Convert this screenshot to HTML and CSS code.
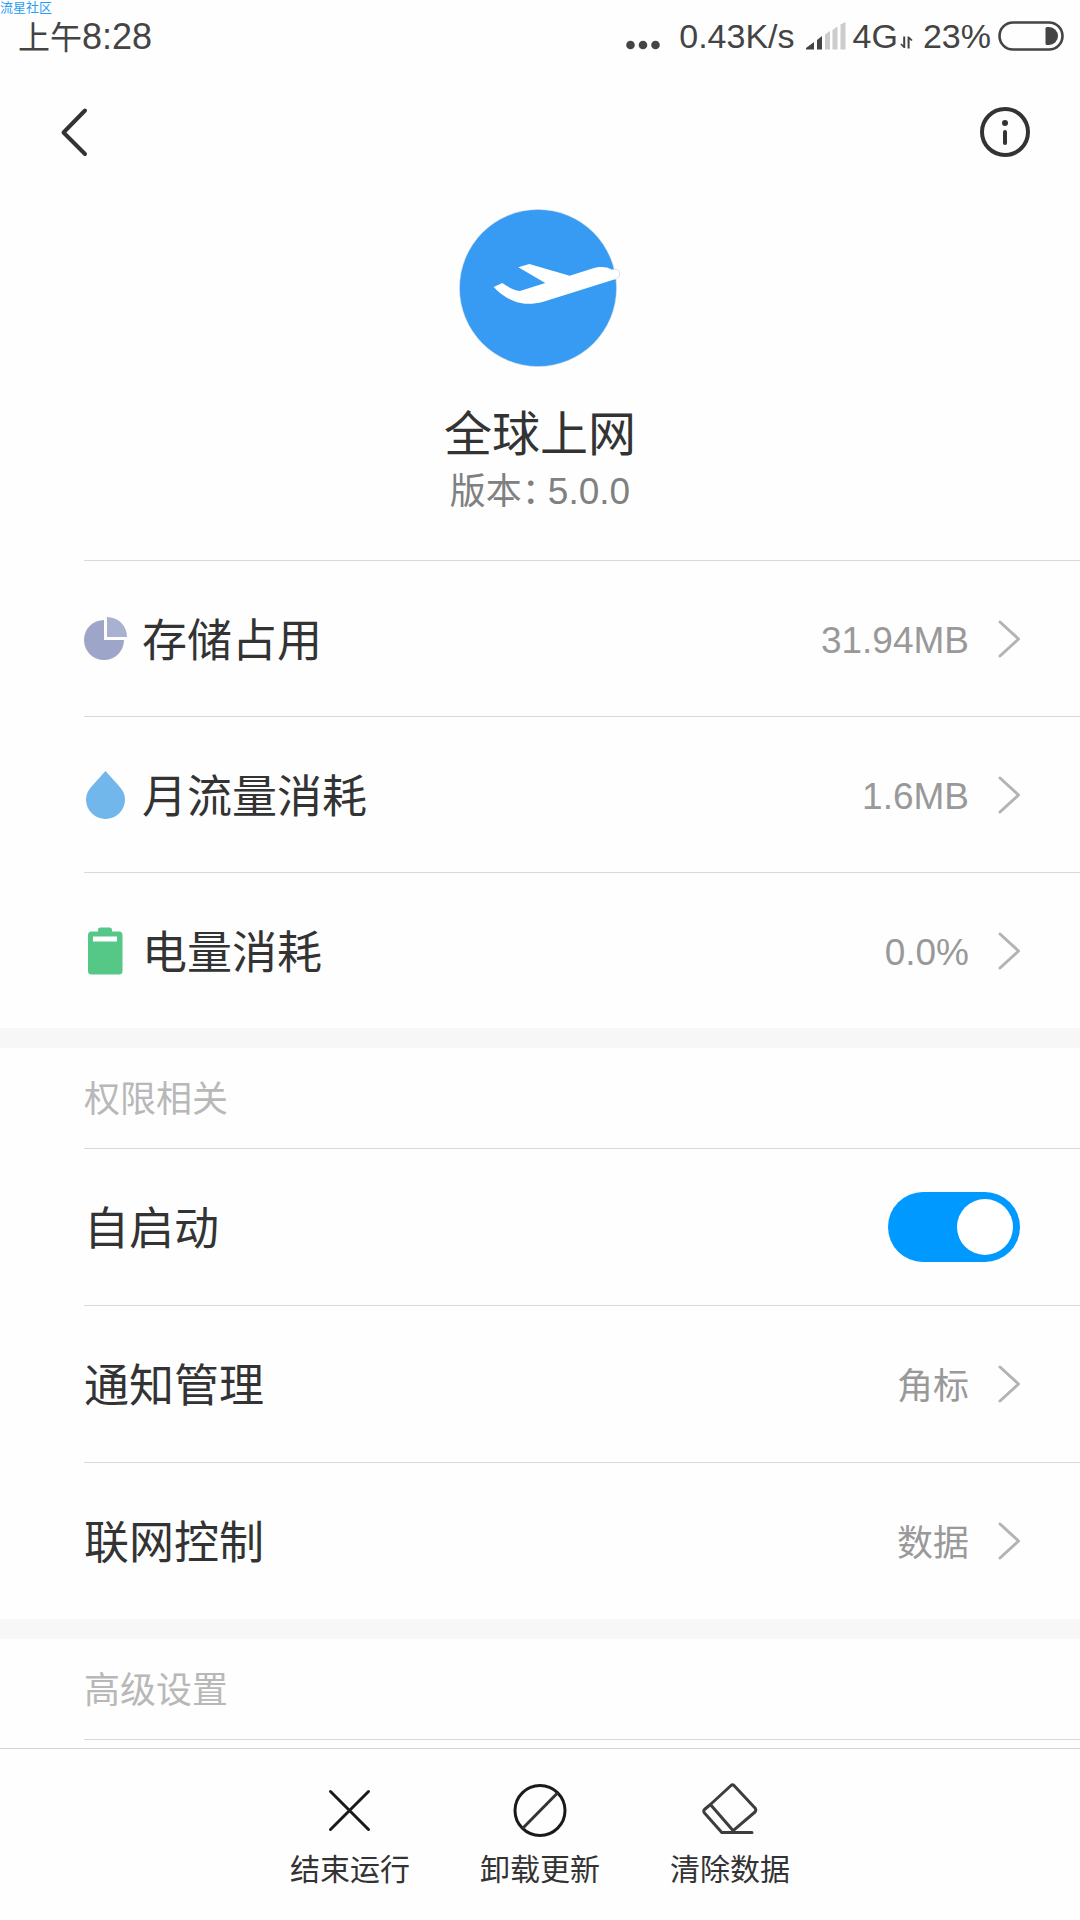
FILE: index.html
```html
<!DOCTYPE html>
<html lang="zh-CN">
<head>
<meta charset="UTF-8" />
<meta name="viewport" content="width=device-width, initial-scale=1.0" />
<title>全球上网</title>
<link rel="stylesheet" href="styles.css">
</head>
<body>

<span class="watermark">流星社区</span>

<!-- Status bar -->
<div class="status-bar">
  <div class="status-time"><span class="status-ampm">上午</span>8:28</div>
  <div class="status-right">
    <svg class="icon-dots" width="34" height="10" viewBox="0 0 34 10" fill="#444">
      <circle cx="4.500" cy="5" r="4.3"/><circle cx="17" cy="5" r="4.3"/><circle cx="29.500" cy="5" r="4.3"/>
    </svg>
    <span>0.43K/s</span>
    <svg class="icon-signal" width="40" height="28" viewBox="0 0 40 28">
      <path d="M0 27.500V26L8 20V27.500ZM11 27.500V18L16 14V27.500Z" fill="#444"/>
      <path d="M19 27.500V12.500L24 9V27.500ZM26.500 27.500V8L31.500 4.500V27.500ZM34.500 27.500V2.500L39.500 0V27.500Z" fill="#ccc"/>
    </svg>
    <span>4G</span>
    <svg class="icon-updown" width="13" height="13" viewBox="0 0 13 13" fill="#444">
      <path d="M3.200 0.500H5.200V12H3.800L0.300 8.500L1.300 7.600L3.200 9ZM7.600 12.500V0.500H9L12.600 4L11.500 5L9.600 3.500V12.500Z"/>
    </svg>
    <span>23%</span>
    <svg class="icon-battery" width="66" height="30" viewBox="0 0 66 30">
      <rect x="1.500" y="1.500" width="63" height="27" rx="13.500" fill="none" stroke="#444" stroke-width="2.600"/>
      <path d="M49 6H51A9 9 0 0 1 51 24H49A1.500 1.500 0 0 1 47.500 22.500V7.500A1.500 1.500 0 0 1 49 6Z" fill="#444"/>
    </svg>
  </div>
</div>

<!-- Toolbar -->
<header class="toolbar">
  <button class="icon-btn" aria-label="返回">
    <svg width="50" height="50" viewBox="0 0 50 50" fill="none" stroke="#333" stroke-width="4" stroke-linecap="round" stroke-linejoin="round">
      <path d="M35 3.500L13.500 25.500L35 47"/>
    </svg>
  </button>
  <button class="icon-btn" aria-label="信息">
    <svg width="50" height="50" viewBox="0 0 50 50">
      <circle cx="25" cy="25" r="23" fill="none" stroke="#333" stroke-width="4"/>
      <circle cx="25" cy="16" r="3" fill="#333"/>
      <path d="M25 25V36" stroke="#333" stroke-width="4" stroke-linecap="round"/>
    </svg>
  </button>
</header>

<main class="content">
  <div class="app-info">
    <svg width="164" height="160" viewBox="0 0 164 160">
      <circle cx="80" cy="80" r="78.500" fill="#389bf3" stroke="#ddd" stroke-width="0.500"/>
      <path d="M35.700 79L44.300 75C50 79 55 82 62 83L87.300 75L60.300 59.300L71.300 56L111.700 67.700L135.300 60.300C141 58.500 149 58.500 153.700 61.700C159 60 162 62.500 161.700 66C161.500 69 159 70.800 157 71.300L85.300 93.700C79 95.600 73 96 67 95.700C55 95 43 87 35.700 79Z" fill="#fff"/>
      <path d="M154 61.700C159 60 162 62.500 161.700 66C161.500 69 159 70.800 157 71.300" fill="none" stroke="#ddd" stroke-width="1"/>
    </svg>
    <h1 class="app-name">全球上网</h1>
    <p class="app-version">版本：<span class="num">5.0.0</span></p>
  </div>

  <!-- Usage -->
  <section class="group usage">
    <a class="row" href="#">
      <svg class="row-icon" width="44" height="48" viewBox="0 0 44 48">
        <path d="M20 5A20 20 0 1 0 40 25H20Z" fill="#9da6c8"/>
        <path d="M23 2A20 20 0 0 1 43 22H23Z" fill="#a9b1d0"/>
      </svg>
      <span class="row-label">存储占用</span>
      <span class="row-value num">31.94MB</span>
      <svg class="chevron" width="22" height="38" viewBox="0 0 22 38"><path d="M2 2L20.500 19L2 36"/></svg>
    </a>
    <a class="row" href="#">
      <svg class="row-icon" width="44" height="48" viewBox="0 0 44 48">
        <path d="M21.500 0L35 15C39 19 41 24 41 28.500A19.500 19.500 0 0 1 2 28.500C2 24 4 19 8 15Z" fill="#71b7ec"/>
      </svg>
      <span class="row-label">月流量消耗</span>
      <span class="row-value num">1.6MB</span>
      <svg class="chevron" width="22" height="38" viewBox="0 0 22 38"><path d="M2 2L20.500 19L2 36"/></svg>
    </a>
    <a class="row" href="#">
      <svg class="row-icon" width="44" height="48" viewBox="0 0 44 48">
        <path d="M14 4.500V3A2.500 2.500 0 0 1 16.500 0.500H25.500A2.500 2.500 0 0 1 28 3V4.500H35A3.500 3.500 0 0 1 38.500 8V44A3.500 3.500 0 0 1 35 47.500H7.500A3.500 3.500 0 0 1 4 44V8A3.500 3.500 0 0 1 7.500 4.500Z" fill="#55c888"/>
        <rect x="9" y="9.500" width="24" height="5" fill="#fff"/>
      </svg>
      <span class="row-label">电量消耗</span>
      <span class="row-value num">0.0%</span>
      <svg class="chevron" width="22" height="38" viewBox="0 0 22 38"><path d="M2 2L20.500 19L2 36"/></svg>
    </a>
  </section>

  <!-- Permissions -->
  <section class="group">
    <h2 class="group-title">权限相关</h2>
    <div class="row">
      <label class="row-label" for="autostart">自启动</label>
      <input class="switch" type="checkbox" id="autostart" checked>
    </div>
    <a class="row" href="#">
      <span class="row-label">通知管理</span>
      <span class="row-value">角标</span>
      <svg class="chevron" width="22" height="38" viewBox="0 0 22 38"><path d="M2 2L20.500 19L2 36"/></svg>
    </a>
    <a class="row" href="#">
      <span class="row-label">联网控制</span>
      <span class="row-value">数据</span>
      <svg class="chevron" width="22" height="38" viewBox="0 0 22 38"><path d="M2 2L20.500 19L2 36"/></svg>
    </a>
  </section>

  <!-- Advanced -->
  <section class="group">
    <h2 class="group-title">高级设置</h2>
    <div class="row"></div>
  </section>
</main>

<!-- Bottom actions -->
<footer class="actions">
  <button class="action">
    <svg width="56" height="56" viewBox="0 0 56 56" fill="none" stroke="#1a1a1a" stroke-width="3" stroke-linecap="round">
      <path d="M8.500 9.500L46.500 47.500M46.500 9.500L8.500 47.500"/>
    </svg>
    <span>结束运行</span>
  </button>
  <button class="action">
    <svg width="56" height="56" viewBox="0 0 56 56" fill="none" stroke="#1a1a1a" stroke-width="3">
      <circle cx="28" cy="28.500" r="25"/>
      <path d="M10.500 46.500L45.500 11" stroke="#333"/>
    </svg>
    <span>卸载更新</span>
  </button>
  <button class="action">
    <svg width="56" height="56" viewBox="0 0 56 56" fill="none" stroke="#3d3d3d" stroke-width="3" stroke-linecap="round" stroke-linejoin="round">
      <path d="M29 3.500Q30.500 2.300 32 3.500L53 26Q54.500 28 53 30L31.200 48.700L8.400 22.500ZM8.400 22.500L2.500 27.500Q1 29 2.500 31L19.800 50.500H50"/>
    </svg>
    <span>清除数据</span>
  </button>
</footer>

</body>
</html>
```

FILE: styles.css
```css
* {
  box-sizing: border-box;
}

body {
  margin: 0;
  height: 100vh;
  display: flex;
  flex-direction: column;
  overflow: hidden;
  background-color: #fefefe;
  color: #333;
  font-family: "Noto Sans CJK SC", sans-serif;
}

svg {
  display: block;
  flex-shrink: 0;
}

button {
  padding: 0;
  border: none;
  background: none;
  color: inherit;
  font: inherit;
  cursor: pointer;
}

.watermark {
  position: absolute;
  top: 0;
  left: 0;
  font-size: 13px;
  line-height: 13px;
  color: #2a9df4;
}

/* Status bar */
.status-bar {
  display: flex;
  justify-content: space-between;
  align-items: center;
  height: 72px;
  padding: 0 16px 0 18px;
  font-family: "Liberation Sans", "Noto Sans CJK SC", sans-serif;
  font-size: 34px;
  line-height: 40px;
  color: #444;
}

.status-time {
  padding-top: 3px;
  font-size: 36px;
}

.status-ampm {
  font-size: 32px;
}

.status-right {
  display: flex;
  align-items: center;
}

.icon-dots {
  margin: 18px 19px 0 0;
}

.icon-signal {
  margin: 0 7px 0 11px;
}

.icon-updown {
  margin: 12px 10px 0 2px;
}

.icon-battery {
  margin-left: 7px;
}

/* Toolbar */
.toolbar {
  display: flex;
  justify-content: space-between;
  align-items: center;
  height: 120px;
  padding: 0 50px;
}

/* App info */
.content {
  flex: 1;
  min-height: 0;
  overflow: hidden;
}

.app-info {
  display: flex;
  flex-direction: column;
  align-items: center;
  padding: 16px 0 48px;
}

.app-name {
  margin: 30px 0 0;
  font-size: 48px;
  font-weight: 400;
  line-height: 64px;
}

.app-version {
  margin: 2px 0 0;
  font-size: 36px;
  line-height: 48px;
  color: #808080;
  font-feature-settings: "halt";
}

.num {
  font-family: "Liberation Sans", sans-serif;
  font-size: 37px;
  line-height: 1;
}

.app-version .num {
  margin-left: 8px;
}

/* Groups and rows */
.group + .group {
  border-top: 20px solid #f7f7f7;
}

.group-title {
  margin: 0;
  padding: 24px 0 28px 84px;
  font-size: 36px;
  font-weight: 400;
  line-height: 48px;
  color: #b8b8b8;
}

.row {
  display: flex;
  align-items: center;
  margin-left: 84px;
  padding: 46px 60px 46px 0;
  border-top: 1px solid #d9d9d9;
  color: #333;
  text-decoration: none;
}

.usage .row {
  padding-bottom: 45px;
}

.row-icon {
  margin-right: 14px;
}

.row-label {
  flex: 1;
  padding-bottom: 2px;
  font-size: 45px;
  line-height: 62px;
}

.row-value {
  margin-right: 29px;
  padding-bottom: 3px;
  font-size: 36px;
  line-height: 48px;
  color: #999;
}

.row-value.num {
  padding: 3px 0 0;
  font-size: 37px;
}

.chevron {
  fill: none;
  stroke: #b3b3b3;
  stroke-width: 3;
  stroke-linecap: round;
  stroke-linejoin: round;
}

.switch {
  appearance: none;
  display: flex;
  justify-content: flex-end;
  width: 132px;
  height: 70px;
  margin: -3px 0;
  padding: 7px;
  border-radius: 35px;
  background-color: #09f;
  cursor: pointer;
}

.switch::before {
  content: "";
  width: 56px;
  height: 56px;
  border-radius: 50%;
  background-color: #fff;
}

.switch:not(:checked) {
  justify-content: flex-start;
  background-color: #ccc;
}

/* Bottom actions */
.actions {
  display: flex;
  justify-content: center;
  padding: 33px 0 31px;
  border-top: 1px solid #d4d4d4;
}

.action {
  display: flex;
  flex-direction: column;
  align-items: center;
  width: 190px;
  gap: 7px;
  font-size: 30px;
  line-height: 44px;
}
```
